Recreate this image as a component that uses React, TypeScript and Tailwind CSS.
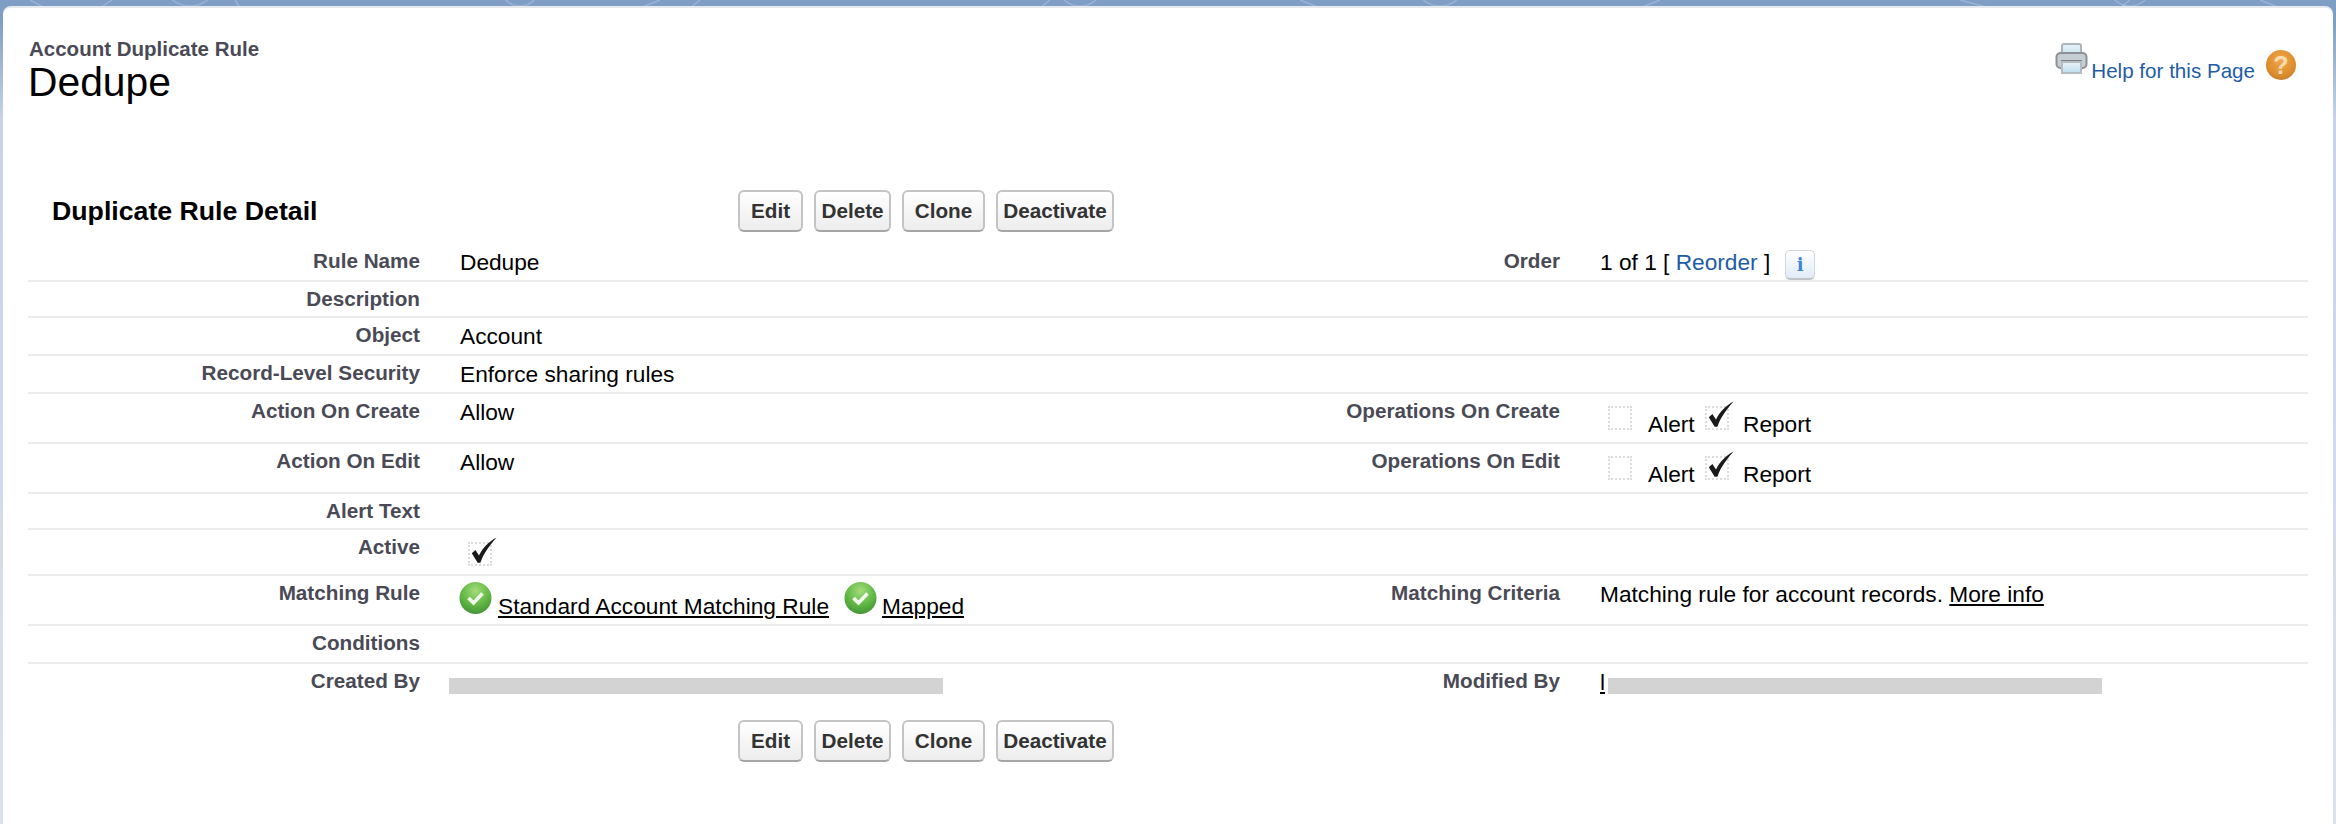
import React from 'react';

const LABEL = 'text-[20.7px] leading-[24px] font-bold text-[#4a4a56] text-right pt-[5px]';
const VALUE = 'text-[22.7px] leading-[27px] text-black';

function Printer() {
  return (
    <svg width="33" height="32" viewBox="0 0 33 32" className="mt-[6px] shrink-0">
      <defs>
        <linearGradient id="prtPaper" x1="0" y1="0" x2="0" y2="1">
          <stop offset="0" stopColor="#eaf3f9" />
          <stop offset="1" stopColor="#bcdff0" />
        </linearGradient>
      </defs>
      <rect x="7" y="1" width="19" height="13" rx="2" fill="url(#prtPaper)" stroke="#aeb4bb" strokeWidth="2" />
      <rect x="1.5" y="10" width="30" height="15" rx="4" fill="#c6cdd3" stroke="#8c9197" strokeWidth="2" />
      <rect x="6" y="17" width="21" height="2" fill="#7d8389" />
      <rect x="7" y="19" width="19" height="11" fill="url(#prtPaper)" stroke="#b7bcc2" strokeWidth="2" />
    </svg>
  );
}

function HelpIcon() {
  return (
    <span className="mt-[13px] ml-[11px] w-[30px] h-[30px] shrink-0 rounded-full flex items-center justify-center bg-[radial-gradient(circle_at_50%_35%,#f0a84c,#dd8c2c_60%,#a87233)] text-[#fbdcb0] text-[25px] leading-none font-bold">
      ?
    </span>
  );
}

function InfoButton() {
  return (
    <span className="mt-[6px] ml-[15px] w-[30px] h-[30px] rounded-[5px] border border-[#d4d8dd] border-b-2 border-b-[#bfc2c6] bg-gradient-to-b from-white to-[#e2ebf9] flex items-center justify-center text-[#3d85d6] font-bold text-[18px] leading-none font-['DejaVu_Serif',serif]">
      i
    </span>
  );
}

function Tick({ className }: { className: string }) {
  return (
    <svg viewBox="0 0 32 30" className={className}>
      <path d="M3 18 L7 14.5 L11 20.5 C15 12 22 5 30.5 0.5 C24 8 16.5 17 12.5 28.5 L9.5 28.5 Z" fill="#1a1a1a" />
    </svg>
  );
}

function CheckBox({ checked, className }: { checked?: boolean; className: string }) {
  return (
    <span className={`relative block w-[24px] h-[24px] shrink-0 border-2 border-dotted border-[#dcdcdc] ${className}`}>
      {checked && <Tick className="absolute -left-[1px] -top-[7px] w-[29px] h-[27px]" />}
    </span>
  );
}

function OkIcon({ id, className }: { id: string; className: string }) {
  return (
    <svg width="33" height="32" viewBox="0 0 33 32" className={`shrink-0 ${className}`}>
      <defs>
        <radialGradient id={id} cx="50%" cy="28%" r="78%">
          <stop offset="0" stopColor="#a4dd7c" />
          <stop offset="0.55" stopColor="#62b845" />
          <stop offset="1" stopColor="#3c8f35" />
        </radialGradient>
      </defs>
      <circle cx="16.5" cy="16" r="16" fill={`url(#${id})`} />
      <path d="M9.5 16 L14.5 21 L23.5 11.5" fill="none" stroke="#f3fbee" strokeWidth="3.6" />
    </svg>
  );
}

function OperationCell() {
  return (
    <div className={`flex items-start pl-[48px] ${VALUE}`}>
      <CheckBox className="mt-[12px]" />
      <span className="mt-[17px] ml-[16px] w-[57px]">Alert</span>
      <CheckBox checked className="mt-[12px]" />
      <span className="mt-[17px] ml-[14px]">Report</span>
    </div>
  );
}

function Row({
  h,
  label,
  value,
  label2,
  value2,
  noBorder,
}: {
  h: string;
  label: string;
  value?: React.ReactNode;
  label2?: string;
  value2?: React.ReactNode;
  noBorder?: boolean;
}) {
  return (
    <div className={`grid grid-cols-[392px_768px_372px_1fr] ${h} ${noBorder ? '' : 'border-b-2 border-[#ececec]'}`}>
      <div className={LABEL}>{label}</div>
      <div className={`pl-[40px] ${VALUE}`}>{value}</div>
      <div className={LABEL}>{label2}</div>
      <div>{value2}</div>
    </div>
  );
}

function Buttons() {
  const items = [
    { text: 'Edit', w: 'w-[65px]' },
    { text: 'Delete', w: 'w-[77px]' },
    { text: 'Clone', w: 'w-[83px]' },
    { text: 'Deactivate', w: 'w-[118px]' },
  ];
  return (
    <div className="flex gap-[11px]">
      {items.map((b) => (
        <button
          key={b.text}
          className={`${b.w} h-[42px] rounded-[6px] border-2 border-[#c4c4c4] border-b-[#a6a6a6] bg-gradient-to-b from-white to-[#ededed] text-[20.7px] font-bold text-[#333]`}
        >
          {b.text}
        </button>
      ))}
    </div>
  );
}

export default function App() {
  return (
    <div className="relative w-[2336px] h-[824px] overflow-hidden pt-[6px] px-[3px] bg-[linear-gradient(#7f9ec6_0,#7f9ec6_20px,#c6d4e8_120px,#dbe2ee_100%)] font-['Liberation_Sans',Arial,sans-serif]">
      {/* background swirl, only the top strip shows */}
      <svg className="absolute left-0 top-0" width="2336" height="8" fill="none" stroke="#ffffff" strokeOpacity="0.22" strokeWidth="1.5">
        <circle cx="190" cy="-22" r="28" />
        <circle cx="190" cy="-22" r="18" />
        <path d="M30 0 L45 8 M100 8 L112 0 M235 0 L240 8 M640 8 L660 0 M700 0 L690 8 M1040 8 L1050 0 M1300 0 L1320 8 M1640 8 L1660 0 M1960 0 L1990 8 M2120 8 L2130 0 M2260 0 L2280 8" />
        <circle cx="520" cy="-14" r="20" />
        <circle cx="1080" cy="-18" r="24" />
        <circle cx="1440" cy="-20" r="26" />
        <circle cx="2130" cy="-16" r="22" />
      </svg>

      <div className="relative h-full bg-white rounded-t-[8px] border-t-2 border-[#e6e9ee] flex flex-col">
        {/* page title */}
        <div className="flex justify-between pt-[29px] pl-[26px] pr-[37px]">
          <div>
            <div className="text-[20.5px] leading-[24px] font-bold text-[#4a4a56]">Account Duplicate Rule</div>
            <div className="text-[40.8px] leading-[46px] text-black -mt-[2px] -ml-[1px]">Dedupe</div>
          </div>
          <div className="flex items-start">
            <Printer />
            <a className="mt-[22px] ml-[3px] text-[20.6px] leading-[24px] text-[#1f5ca6]">Help for this Page</a>
            <HelpIcon />
          </div>
        </div>

        {/* detail block */}
        <div className="mt-[85px] ml-[25px] mr-[25px]">
          <div className="flex h-[42px] mb-[12px]">
            <h2 className="w-[710px] pl-[24px] text-[26.7px] leading-[42px] font-bold text-black">Duplicate Rule Detail</h2>
            <Buttons />
          </div>

          <Row
            h="h-[38px]"
            label="Rule Name"
            value={<div className="pt-[5px]">Dedupe</div>}
            label2="Order"
            value2={
              <div className={`flex items-start pl-[40px] ${VALUE}`}>
                <span className="pt-[5px] whitespace-pre">
                  1 of 1 [ <a className="text-[#1f5ca6]">Reorder</a> ]
                </span>
                <InfoButton />
              </div>
            }
          />
          <Row h="h-[36px]" label="Description" />
          <Row h="h-[38px]" label="Object" value={<div className="pt-[5px]">Account</div>} />
          <Row h="h-[38px]" label="Record-Level Security" value={<div className="pt-[5px]">Enforce sharing rules</div>} />
          <Row
            h="h-[50px]"
            label="Action On Create"
            value={<div className="pt-[5px]">Allow</div>}
            label2="Operations On Create"
            value2={<OperationCell />}
          />
          <Row
            h="h-[50px]"
            label="Action On Edit"
            value={<div className="pt-[5px]">Allow</div>}
            label2="Operations On Edit"
            value2={<OperationCell />}
          />
          <Row h="h-[36px]" label="Alert Text" />
          <Row h="h-[46px]" label="Active" value={<CheckBox checked className="mt-[12px] ml-[8px]" />} />
          <Row
            h="h-[50px]"
            label="Matching Rule"
            value={
              <div className="flex items-start -ml-[1px]">
                <OkIcon id="okRule" className="mt-[6px]" />
                <a className="mt-[17px] ml-[6px] underline tracking-[0.02px]">Standard Account Matching Rule</a>
                <OkIcon id="okMapped" className="mt-[6px] ml-[15px]" />
                <a className="mt-[17px] ml-[5px] underline">Mapped</a>
              </div>
            }
            label2="Matching Criteria"
            value2={
              <div className={`pl-[40px] pt-[5px] ${VALUE}`}>
                Matching rule for account records. <a className="underline">More info</a>
              </div>
            }
          />
          <Row h="h-[38px]" label="Conditions" />
          <Row
            h="h-[38px]"
            noBorder
            label="Created By"
            value={<div className="w-[494px] h-[16px] mt-[14px] -ml-[11px] bg-[#d3d3d3]" />}
            label2="Modified By"
            value2={
              <div className="flex items-start pl-[40px]">
                <a className={`underline mt-[5px] w-[8px] ${VALUE}`}>l</a>
                <div className="w-[494px] h-[16px] mt-[14px] bg-[#d3d3d3]" />
              </div>
            }
          />

          <div className="mt-[18px] pl-[710px]">
            <Buttons />
          </div>
        </div>
      </div>
    </div>
  );
}
